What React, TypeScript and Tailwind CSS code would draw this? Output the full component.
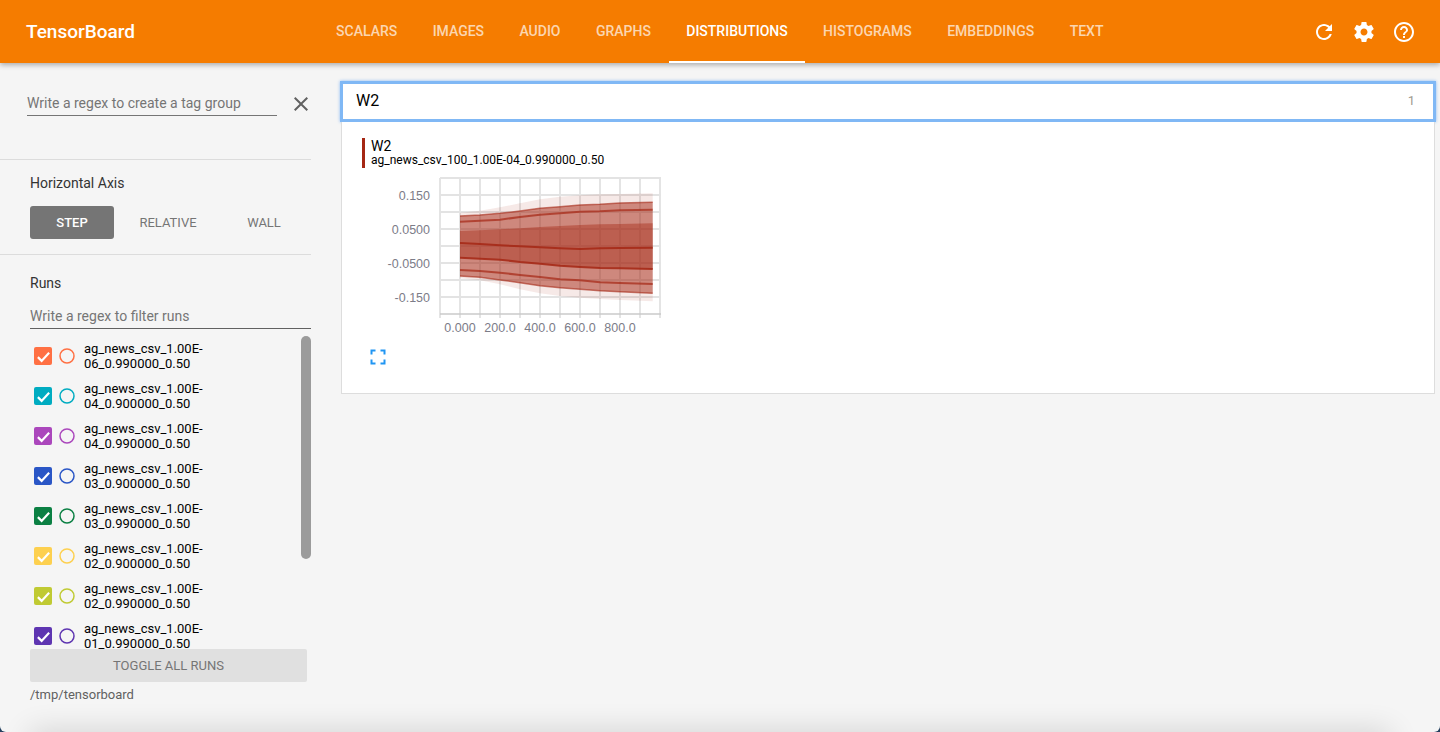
const tabs = ['SCALARS', 'IMAGES', 'AUDIO', 'GRAPHS', 'DISTRIBUTIONS', 'HISTOGRAMS', 'EMBEDDINGS', 'TEXT'];

const runs = [
  { a: 'ag_news_csv_1.00E-', b: '06_0.990000_0.50', box: 'bg-[#ff7043]', ring: 'text-[#ff7043]' },
  { a: 'ag_news_csv_1.00E-', b: '04_0.900000_0.50', box: 'bg-[#00acc1]', ring: 'text-[#00acc1]' },
  { a: 'ag_news_csv_1.00E-', b: '04_0.990000_0.50', box: 'bg-[#ab47bc]', ring: 'text-[#ab47bc]' },
  { a: 'ag_news_csv_1.00E-', b: '03_0.900000_0.50', box: 'bg-[#2a56c6]', ring: 'text-[#2a56c6]' },
  { a: 'ag_news_csv_1.00E-', b: '03_0.990000_0.50', box: 'bg-[#0b8043]', ring: 'text-[#0b8043]' },
  { a: 'ag_news_csv_1.00E-', b: '02_0.900000_0.50', box: 'bg-[#fdd04f]', ring: 'text-[#fdd04f]' },
  { a: 'ag_news_csv_1.00E-', b: '02_0.990000_0.50', box: 'bg-[#c0ca33]', ring: 'text-[#c0ca33]' },
  { a: 'ag_news_csv_1.00E-', b: '01_0.990000_0.50', box: 'bg-[#5e35b1]', ring: 'text-[#5e35b1]' },
];

const xs = [460, 480, 500, 520, 540, 560, 580, 600, 620, 652.7];
const outerTop = [212.7, 210.7, 207.3, 203.3, 199.3, 196.7, 195.3, 194.3, 194, 193.3];
const bandTop = [216, 215, 213.3, 211, 208.3, 206.7, 205, 204.3, 203, 202.3];
const lineTop = [221.7, 220.7, 219.7, 217, 214.7, 213.3, 211.7, 211.3, 210.3, 209.7];
const innerTop = [231, 230.3, 229.3, 228.3, 227, 226, 225, 224.3, 224, 223.3];
const median = [243, 244, 245.3, 246.3, 247.3, 248.3, 249, 248.3, 248, 247.7];
const innerBot = [257.7, 258.7, 259.7, 262, 263.7, 265.7, 267, 268, 268.3, 269];
const lineBot = [270, 271, 272.7, 275, 277, 279.3, 280.3, 282.3, 283, 284];
const bandBot = [276, 277.3, 280, 282.7, 285.7, 287.7, 289.3, 290.7, 291.7, 293.3];
const outerBot = [278.3, 280.3, 284.3, 289.3, 293.3, 296, 297.7, 299, 300, 301.3];

// the chart is drawn in page coordinates, the viewBox starts at the svg's place on the page
const line = (ys: number[]) => xs.map((x, i) => `${x},${ys[i]}`).join(' ');
const band = (top: number[], bot: number[]) =>
  [...xs.map((x, i) => `${x},${top[i]}`), ...xs.map((x, i) => `${x},${bot[i]}`).reverse()].join(' ');

function Chart() {
  const vertical = [440, 460, 480, 500, 520, 540, 560, 580, 600, 620, 640, 660];
  const horizontal = [178, 195, 212, 229, 246, 263, 280, 297];
  return (
    <svg width="300" height="170" viewBox="380 172 300 170" className="block">
      {vertical.map((x) => (
        <line key={x} x1={x} y1={178} x2={x} y2={318} stroke="#d6d6d6" strokeWidth="1.3" />
      ))}
      {horizontal.map((y) => (
        <line key={y} x1={440} y1={y} x2={661} y2={y} stroke="#e3e3e3" strokeWidth="1.8" />
      ))}
      <line x1={440} y1={314} x2={661} y2={314} stroke="#cacaca" strokeWidth="1.5" />
      <polygon points={band(outerTop, outerBot)} fill="#a52714" opacity="0.1" />
      <polygon points={band(bandTop, bandBot)} fill="#a52714" opacity="0.5" />
      <polygon points={band(innerTop, innerBot)} fill="#a52714" opacity="0.42" />
      {[bandTop, bandBot].map((ys, i) => (
        <polyline key={i} points={line(ys)} fill="none" stroke="#a52714" strokeOpacity="0.6" strokeWidth="1.5" />
      ))}
      {[lineTop, lineBot].map((ys, i) => (
        <polyline key={i} points={line(ys)} fill="none" stroke="#a52714" strokeOpacity="0.7" strokeWidth="2" />
      ))}
      {[median, innerBot].map((ys, i) => (
        <polyline key={i} points={line(ys)} fill="none" stroke="#a52714" strokeOpacity="0.85" strokeWidth="2" />
      ))}
      <g fontFamily="'Liberation Sans', sans-serif" fontSize="12.5" fill="#7c7c88" textAnchor="end">
        <text x="430" y="199.5">0.150</text>
        <text x="430" y="233.5">0.0500</text>
        <text x="430" y="267.5">-0.0500</text>
        <text x="430" y="301.5">-0.150</text>
      </g>
      <g fontFamily="'Liberation Sans', sans-serif" fontSize="12.5" fill="#7c7c88" textAnchor="middle">
        <text x="460" y="332">0.000</text>
        <text x="500" y="332">200.0</text>
        <text x="540" y="332">400.0</text>
        <text x="580" y="332">600.0</text>
        <text x="620" y="332">800.0</text>
      </g>
    </svg>
  );
}

function Header() {
  return (
    <header className="relative z-10 flex h-[63px] shrink-0 items-center bg-[#f57c00] text-white shadow-[0_2px_5px_rgba(0,0,0,0.3)]">
      <div className="w-[318.4px] pl-[26px] pt-px text-[19px] font-medium">TensorBoard</div>
      <nav className="flex h-full">
        {tabs.map((tab) => (
          <div
            key={tab}
            className={`flex items-center border-b-2 px-[17.7px] pt-[1px] text-[14px] font-medium ${
              tab === 'DISTRIBUTIONS' ? 'border-white text-white' : 'border-transparent text-white/70'
            }`}
          >
            {tab}
          </div>
        ))}
      </nav>
      <div className="ml-auto flex gap-4 pr-6">
        <svg width="24" height="24" viewBox="0 0 24 24" fill="white">
          <path d="M17.65 6.35C16.2 4.9 14.21 4 12 4c-4.42 0-7.99 3.58-7.99 8s3.57 8 7.99 8c3.73 0 6.84-2.55 7.73-6h-2.08c-.82 2.33-3.04 4-5.65 4-3.31 0-6-2.69-6-6s2.69-6 6-6c1.66 0 3.14.69 4.22 1.78L13 11h7V4l-2.35 2.35z" />
        </svg>
        <svg width="24" height="24" viewBox="0 0 24 24" fill="white">
          <path d="M19.43 12.98c.04-.32.07-.64.07-.98s-.03-.66-.07-.98l2.11-1.65c.19-.15.24-.42.12-.64l-2-3.46c-.12-.22-.39-.3-.61-.22l-2.49 1c-.52-.4-1.08-.73-1.69-.98l-.38-2.65C14.46 2.18 14.25 2 14 2h-4c-.25 0-.46.18-.49.42l-.38 2.65c-.61.25-1.17.59-1.69.98l-2.49-1c-.23-.09-.49 0-.61.22l-2 3.46c-.13.22-.07.49.12.64l2.11 1.65c-.04.32-.07.65-.07.98s.03.66.07.98l-2.11 1.65c-.19.15-.24.42-.12.64l2 3.46c.12.22.39.3.61.22l2.49-1c.52.4 1.08.73 1.69.98l.38 2.65c.03.24.24.42.49.42h4c.25 0 .46-.18.49-.42l.38-2.65c.61-.25 1.17-.59 1.69-.98l2.49 1c.23.09.49 0 .61-.22l2-3.46c.12-.22.07-.49-.12-.64l-2.11-1.65zM12 15.5c-1.93 0-3.5-1.57-3.5-3.5s1.57-3.5 3.5-3.5 3.5 1.57 3.5 3.5-1.57 3.5-3.5 3.5z" />
        </svg>
        <svg width="24" height="24" viewBox="0 0 24 24" fill="white">
          <path d="M11 18h2v-2h-2v2zm1-16C6.48 2 2 6.48 2 12s4.48 10 10 10 10-4.48 10-10S17.52 2 12 2zm0 18c-4.41 0-8-3.59-8-8s3.59-8 8-8 8 3.59 8 8-3.59 8-8 8zm0-14c-2.21 0-4 1.79-4 4h2c0-1.1.9-2 2-2s2 .9 2 2c0 2-3 1.75-3 5h2c0-2.25 3-2.5 3-5 0-2.21-1.79-4-4-4z" />
        </svg>
      </div>
    </header>
  );
}

function Sidebar() {
  return (
    <aside className="flex w-[311px] shrink-0 flex-col">
      <div className="h-[97px] border-b border-[#dcdcdc] pl-[27px] pt-[31px]">
        <div className="flex items-center">
          <div className="h-[22px] w-[250px] shrink-0 border-b border-[#757575] text-[14px] leading-[18px] text-[#757575]">
            Write a regex to create a tag group
          </div>
          <svg width="24" height="24" viewBox="0 0 24 24" className="ml-3 mt-[-2px] shrink-0" fill="#616161">
            <path d="M19 6.41L17.59 5 12 10.59 6.41 5 5 6.41 10.59 12 5 17.59 6.41 19 12 13.41 17.59 19 19 17.59 13.41 12z" />
          </svg>
        </div>
      </div>
      <div className="h-[95px] border-b border-[#dcdcdc] pl-[30px] pt-[14px]">
        <div className="text-[14px] leading-[18px] text-[#333]">Horizontal Axis</div>
        <div className="mt-[14px] flex text-[13px]">
          <div className="flex h-[33px] w-[84px] items-center justify-center rounded-[3px] bg-[#757575] font-medium text-white">STEP</div>
          <div className="flex h-[33px] w-[108px] items-center justify-center text-[#757575]">RELATIVE</div>
          <div className="flex h-[33px] w-[84px] items-center justify-center text-[#757575]">WALL</div>
        </div>
      </div>
      <div className="pl-[30px] pt-[19px]">
        <div className="text-[14px] leading-[18px] text-[#333]">Runs</div>
        <div className="mt-[15px] h-[22px] border-b border-[#616161] text-[14px] leading-[18px] text-[#757575]">
          Write a regex to filter runs
        </div>
        <div className="relative mt-[7px] h-[313px] overflow-hidden">
          {runs.map((run) => (
            <div key={run.b} className="flex h-10 items-center text-[13px] leading-[15px] text-black">
              <div className={`ml-1 flex h-[18px] w-[18px] items-center justify-center rounded-[2px] ${run.box}`}>
                <svg width="15" height="15" viewBox="0 0 24 24" fill="none" stroke="white" strokeWidth="3.5">
                  <path d="M3 13l6 6L21 6" />
                </svg>
              </div>
              <svg width="16" height="16" viewBox="0 0 16 16" fill="none" stroke="currentColor" strokeWidth="1.5" className={`ml-[7px] ${run.ring}`}>
                <circle cx="8" cy="8" r="7" />
              </svg>
              <div className="ml-[9px]">
                <div>{run.a}</div>
                <div>{run.b}</div>
              </div>
            </div>
          ))}
          <div className="absolute right-0 top-0 h-[223px] w-[10px] rounded-[5px] bg-[#9b9b9b]" />
        </div>
        <div className="flex h-[33px] w-[277px] items-center justify-center rounded-[2px] bg-[#e0e0e0] text-[13px] text-[#757575]">
          TOGGLE ALL RUNS
        </div>
        <div className="mt-[5px] text-[13px] leading-[16px] text-[#616161]">/tmp/tensorboard</div>
      </div>
    </aside>
  );
}

function Main() {
  return (
    <main className="flex-1 pl-[29px] pr-[4px] pt-[18px]">
      <div className="flex h-[41px] items-center justify-between border-[3px] border-[#80b8f5] bg-white pb-px pl-[13px] pr-[18px] shadow-[0_0_3px_rgba(110,170,245,0.8)]">
        <span className="text-[16px] text-black">W2</span>
        <span className="text-[13px] text-[#a09a90]">1</span>
      </div>
      <div className="mx-px h-[272px] border border-t-0 border-[#dddddd] bg-white pl-[20px] pt-[16px]">
        <div className="flex h-[30px] border-l-[3px] border-[#a52714] pl-[6px]">
          <div className="pt-px leading-[15px] text-black">
            <div className="text-[14px] leading-[14px]">W2</div>
            <div className="text-[12px]">ag_news_csv_100_1.00E-04_0.990000_0.50</div>
          </div>
        </div>
        <div className="ml-[18px] mt-[4px]">
          <Chart />
        </div>
        <svg width="16" height="16" viewBox="0 0 16 16" fill="none" stroke="#2196f3" strokeWidth="2" className="ml-[8px] mt-[7px]">
          <path d="M1.5 5.5V1.5H5.5M10.5 1.5H14.5V5.5M1.5 10.5V14.5H5.5M14.5 10.5V14.5H10.5" />
        </svg>
      </div>
    </main>
  );
}

export default function App() {
  return (
    <div className="h-[732px] w-[1440px] overflow-hidden bg-[#25405f]">
      <div
        className="relative flex h-full flex-col overflow-hidden rounded-b-[6px] bg-[#f5f5f5]"
        style={{ fontFamily: "Roboto, 'Liberation Sans', sans-serif" }}
      >
        <Header />
        <div className="flex flex-1">
          <Sidebar />
          <Main />
        </div>
        <div className="absolute bottom-[-24px] left-[30px] right-[50px] h-6 shadow-[0_0_30px_rgba(0,0,0,0.16)]" />
      </div>
    </div>
  );
}
